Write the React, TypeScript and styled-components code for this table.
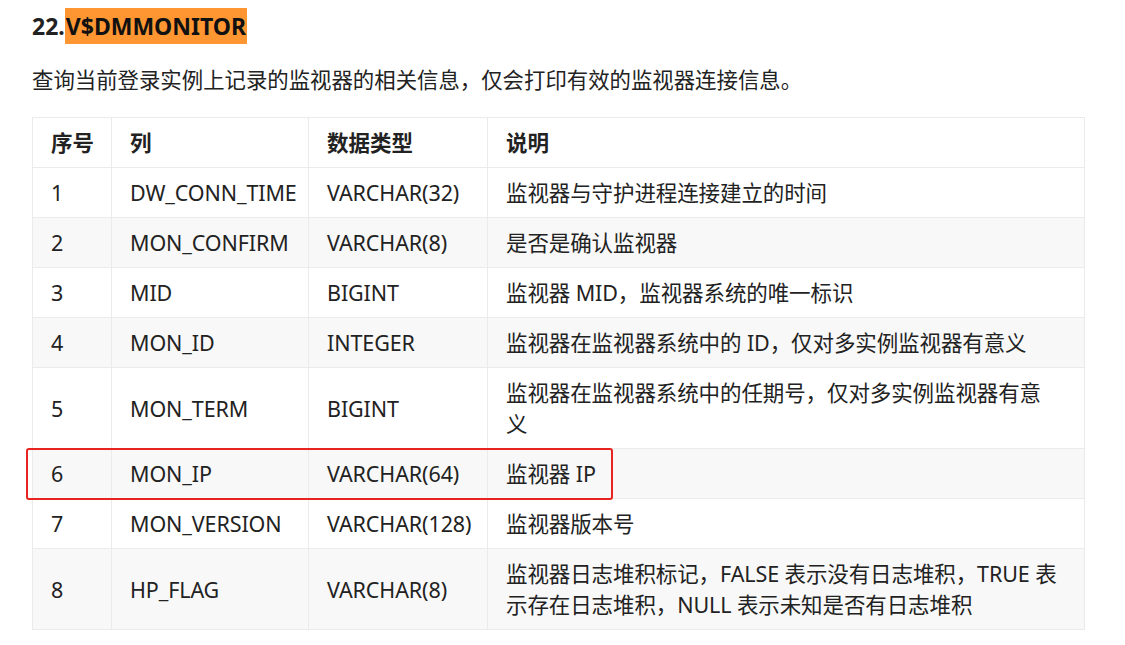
import styled, { createGlobalStyle } from "styled-components";

const GlobalStyle = createGlobalStyle`
  body {
    margin: 0;
    background: #fff;
    font-family: "Noto Sans", "Noto Sans CJK SC", sans-serif;
    color: #222;
  }
`;

const Page = styled.div`
  position: relative;
  padding: 8px 40px 0 32px;
`;

const Heading = styled.h3`
  margin: 0;
  font-size: 23px;
  font-weight: 700;
  line-height: 36px;
  color: #222;
`;

const Mark = styled.span`
  background: #ff9632;
  color: #111;
  padding: 2px 1px;
`;

const Intro = styled.p`
  margin: 20px 0 21px;
  font-size: 21.4px;
  line-height: 32px;
  color: #222;
`;

const Table = styled.table`
  border-collapse: collapse;
  width: 1053px;
  font-size: 21.5px;
  line-height: 31px;
  table-layout: fixed;
`;

const Row = styled.tr<{ $striped?: boolean }>`
  background: ${(p) => (p.$striped ? "#f8f8f8" : "#fff")};
`;

const Th = styled.th`
  text-align: left;
  font-weight: 700;
  white-space: nowrap;
  padding: 9px 12px 9px 18px;
  border: 1px solid #ebebeb;
`;

const Td = styled.td`
  padding: 9px 24px 9px 18px;
  border: 1px solid #ebebeb;
  vertical-align: middle;
  letter-spacing: -0.1px;
`;

const Highlight = styled.div`
  position: absolute;
  left: 26px;
  top: 448px;
  width: 583px;
  height: 48px;
  border: 2px solid #e82420;
  border-radius: 3px;
  pointer-events: none;
`;

const rows = [
  ["1", "DW_CONN_TIME", "VARCHAR(32)", "监视器与守护进程连接建立的时间"],
  ["2", "MON_CONFIRM", "VARCHAR(8)", "是否是确认监视器"],
  ["3", "MID", "BIGINT", "监视器 MID，监视器系统的唯一标识"],
  ["4", "MON_ID", "INTEGER", "监视器在监视器系统中的 ID，仅对多实例监视器有意义"],
  ["5", "MON_TERM", "BIGINT", "监视器在监视器系统中的任期号，仅对多实例监视器有意义"],
  ["6", "MON_IP", "VARCHAR(64)", "监视器 IP"],
  ["7", "MON_VERSION", "VARCHAR(128)", "监视器版本号"],
  [
    "8",
    "HP_FLAG",
    "VARCHAR(8)",
    "监视器日志堆积标记，FALSE 表示没有日志堆积，TRUE 表示存在日志堆积，NULL 表示未知是否有日志堆积",
  ],
];

export default function App() {
  return (
    <Page>
      <GlobalStyle />
      <Heading>
        22.<Mark>V$DMMONITOR</Mark>
      </Heading>
      <Intro>查询当前登录实例上记录的监视器的相关信息，仅会打印有效的监视器连接信息。</Intro>
      <Table>
        <colgroup>
          <col style={{ width: 79 }} />
          <col style={{ width: 197 }} />
          <col style={{ width: 179 }} />
          <col />
        </colgroup>
        <thead>
          <Row>
            <Th>序号</Th>
            <Th>列</Th>
            <Th>数据类型</Th>
            <Th>说明</Th>
          </Row>
        </thead>
        <tbody>
          {rows.map((r, i) => (
            <Row key={r[0]} $striped={i % 2 === 1}>
              {r.map((c, j) => (
                <Td key={j}>{c}</Td>
              ))}
            </Row>
          ))}
        </tbody>
      </Table>
      <Highlight />
    </Page>
  );
}
